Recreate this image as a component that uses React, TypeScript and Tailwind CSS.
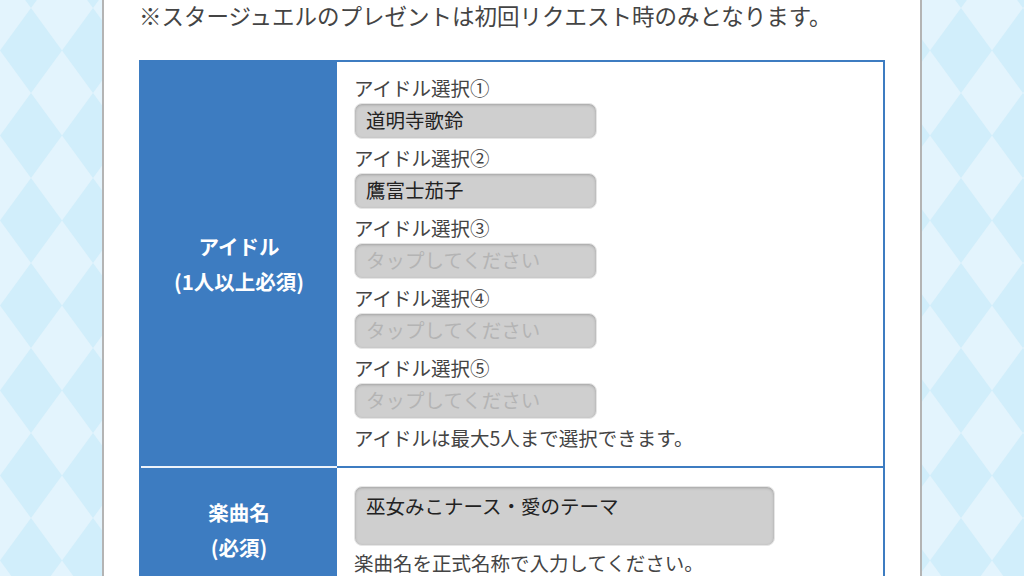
import React from "react";

const FONT = { fontFamily: '"Noto Sans CJK JP", "Noto Sans", sans-serif' };

const IDOLS: { label: string; value: string }[] = [
  { label: "アイドル選択①", value: "道明寺歌鈴" },
  { label: "アイドル選択②", value: "鷹富士茄子" },
  { label: "アイドル選択③", value: "" },
  { label: "アイドル選択④", value: "" },
  { label: "アイドル選択⑤", value: "" },
];

function Harlequin() {
  return (
    <svg className="absolute inset-0 w-full h-full" aria-hidden="true">
      <defs>
        <pattern id="harlequin" x="0" y="8" width="62" height="85" patternUnits="userSpaceOnUse">
          <rect width="62" height="85" fill="#e3f4fd" />
          <path d="M31 0 L62 42.5 L31 85 L0 42.5 Z" fill="#d1eefb" />
        </pattern>
      </defs>
      <rect width="100%" height="100%" fill="url(#harlequin)" />
    </svg>
  );
}

function FakeInput({ value }: { value: string }) {
  return (
    <div className="h-[36px] w-[243px] rounded-[8px] bg-[#cfcfcf] border border-[#e6e6e6] shadow-[inset_0_1px_3px_rgba(0,0,0,0.22)] px-[11px] text-[19.5px] leading-[31px] mb-[4px]">
      {value ? (
        <span className="text-[#222]">{value}</span>
      ) : (
        <span className="text-[#b4b4b4]">タップしてください</span>
      )}
    </div>
  );
}

export default function App() {
  return (
    <div className="relative min-h-screen overflow-hidden" style={FONT}>
      <Harlequin />
      <div className="relative mx-auto w-[820px] min-h-screen bg-white border-x-2 border-[#b4b4b4] px-[35px]">
        <p className="text-[22.5px] leading-[30px] text-[#444] mb-[30px]">
          ※スタージュエルのプレゼントは初回リクエスト時のみとなります。
        </p>

        <div className="border-2 border-[#3d7cc1]">
          {/* idol row */}
          <div className="flex">
            <div className="w-[196px] shrink-0 bg-[#3d7cc1] border-b-2 border-[#eef3fa] flex flex-col items-center justify-center text-white font-bold text-[20.5px] leading-[35px]">
              <span>アイドル</span>
              <span>(1人以上必須)</span>
            </div>
            <div className="flex-1 border-b-2 border-[#3d7cc1] pl-[17px] pt-[11px] pb-[13px] text-[#444]">
              {IDOLS.map((idol) => (
                <div key={idol.label}>
                  <div className="text-[19.5px] leading-[30px]">{idol.label}</div>
                  <FakeInput value={idol.value} />
                </div>
              ))}
              <div className="text-[19.5px] leading-[30px]">アイドルは最大5人まで選択できます。</div>
            </div>
          </div>

          {/* song row */}
          <div className="flex">
            <div className="w-[196px] shrink-0 bg-[#3d7cc1] flex flex-col items-center justify-center text-white font-bold text-[20.5px] leading-[35px]">
              <span>楽曲名</span>
              <span>(必須)</span>
            </div>
            <div className="flex-1 pl-[17px] pt-[18px] pb-[13px] text-[#444]">
              <div className="h-[60px] w-[421px] rounded-[8px] bg-[#cfcfcf] border border-[#e6e6e6] shadow-[inset_0_1px_3px_rgba(0,0,0,0.22)] px-[11px] pt-[4px] text-[19.5px] leading-[30px] text-[#222] mb-[2px]">
                巫女みこナース・愛のテーマ
              </div>
              <div className="text-[19.5px] leading-[30px]">楽曲名を正式名称で入力してください。</div>
            </div>
          </div>
        </div>
      </div>
    </div>
  );
}
